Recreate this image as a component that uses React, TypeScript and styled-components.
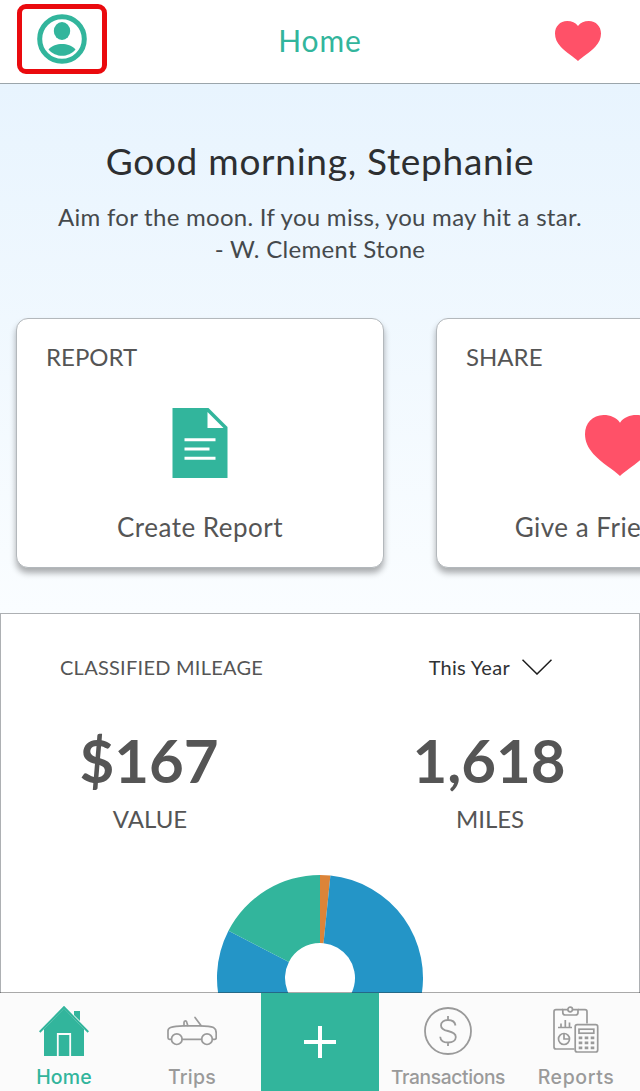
import React from "react";
import styled, { createGlobalStyle } from "styled-components";

const teal = "#32b59c";
const coral = "#ff5168";
const iconGray = "#9a9a9a";

const GlobalStyle = createGlobalStyle`
  * { box-sizing: border-box; }
  html, body { margin: 0; padding: 0; }
  body {
    font-family: Lato, "Liberation Sans", sans-serif;
    color: #555;
    background: #fff;
    overflow: hidden;
  }
  svg { display: block; flex: none; }
`;

const Screen = styled.div`
  display: flex;
  flex-direction: column;
  width: 640px;
  height: 1091px;
  overflow: hidden;
`;

const TopBar = styled.header`
  display: grid;
  grid-template-columns: 1fr auto 1fr;
  align-items: center;
  height: 84px;
  padding: 0 17px 5px;
  background: #fff;
  border-bottom: 1px solid #9ba5ab;
`;

const ProfileButton = styled.div`
  display: flex;
  align-items: center;
  justify-content: center;
  width: 90px;
  height: 70px;
  border: 5px solid #ea0a0e;
  border-radius: 9px;
`;

const ScreenTitle = styled.h1`
  margin: 0;
  padding-top: 2px;
  font-size: 30px;
  line-height: 36px;
  font-weight: 400;
  letter-spacing: 0.9px;
  color: ${teal};
`;

const TopAction = styled.div`
  justify-self: end;
  padding: 4px 22px 0 0;
`;

const Hero = styled.section`
  height: 529px;
  padding-top: 55px;
  background: linear-gradient(#e8f4fe, #fafdff);
`;

const Greeting = styled.h2`
  margin: 0;
  font-size: 37px;
  line-height: 44px;
  font-weight: 400;
  letter-spacing: 0.73px;
  text-align: center;
  color: #2d2f31;
`;

const Quote = styled.p`
  margin: 18px 0 0;
  font-size: 24px;
  line-height: 32px;
  letter-spacing: 0.28px;
  text-align: center;
  color: #45494c;
`;

const Carousel = styled.div`
  display: flex;
  gap: 52px;
  margin-top: 53px;
  padding-left: 16px;
`;

const Card = styled.article`
  display: flex;
  flex: none;
  flex-direction: column;
  align-items: center;
  width: 368px;
  height: 250px;
  padding: 23px 29px;
  background: #fff;
  border: 1px solid #b3b8bc;
  border-radius: 12px;
  box-shadow: 0 5px 6px rgba(0, 0, 0, 0.32);
`;

const CardLabel = styled.div`
  align-self: flex-start;
  font-size: 24px;
  line-height: 30px;
  letter-spacing: 0;
`;

const CardArt = styled.div<{ $drop?: number }>`
  display: flex;
  align-items: center;
  height: 70px;
  margin-top: 36px;
  padding-top: ${(p) => p.$drop || 0}px;
`;

const CardAction = styled.div`
  margin-top: 33px;
  font-size: 26px;
  line-height: 32px;
  white-space: nowrap;
  letter-spacing: 0.5px;
`;

const Summary = styled.section`
  height: 380px;
  overflow: hidden;
  background: #fff;
  border: 1px solid #adb0b3;
  border-bottom: 0;
`;

const SummaryHeader = styled.div`
  display: flex;
  align-items: center;
  justify-content: space-between;
  height: 26px;
  margin-top: 40px;
  padding: 0 87px 0 59px;
`;

const SummaryTitle = styled.div`
  font-size: 20px;
  line-height: 26px;
  letter-spacing: 0.25px;
`;

const PeriodSelect = styled.div`
  display: flex;
  align-items: center;
  gap: 12px;
  font-size: 20px;
  line-height: 26px;
  letter-spacing: 0.3px;
  color: #303234;
`;

const StatRow = styled.div`
  display: flex;
  justify-content: space-between;
  margin: 44px -1px 0;
`;

const Stat = styled.div`
  width: 300px;
  text-align: center;
`;

const StatNumber = styled.div`
  font-size: 60px;
  line-height: 72px;
  font-weight: 700;
  letter-spacing: 0;
  margin: 0 1px 0 -1px;
`;

const StatLabel = styled.div`
  margin-top: 8px;
  font-size: 24px;
  line-height: 30px;
`;

const ChartArea = styled.div`
  display: flex;
  justify-content: center;
  margin-top: 41px;
`;

const TabBar = styled.nav`
  display: grid;
  grid-template-columns: repeat(5, 1fr);
  position: relative;
  height: 99px;
  margin-top: -1px;
  background: #fbfbfb;
  background-clip: padding-box;
  border-top: 1px solid rgba(40, 40, 40, 0.4);
`;

const Tab = styled.div<{ $active?: boolean; $spacing: number; $size?: number }>`
  display: flex;
  flex-direction: column;
  align-items: center;
  justify-content: space-between;
  padding: 12px 0 2px;
  font-family: Inter, "Liberation Sans", sans-serif;
  font-size: ${(p) => p.$size || 19.5}px;
  line-height: 24px;
  font-weight: 500;
  letter-spacing: ${(p) => p.$spacing}px;
  color: ${(p) => (p.$active ? teal : iconGray)};
`;

const AddButton = styled.div`
  display: flex;
  align-items: center;
  justify-content: center;
  justify-self: center;
  width: 118px;
  background: ${teal};
`;

const ProfileIcon = () => (
  <svg width="50" height="50" viewBox="0 0 50 50" fill={teal}>
    <circle cx="25" cy="25" r="22.3" fill="none" stroke={teal} strokeWidth="5" />
    <ellipse cx="25" cy="17" rx="8.2" ry="9" />
    <path d="M11.500 35.500C15 31.500 20 30 25 30s10 1.500 13.500 5.500C35 39.500 30 41.800 25 41.800S15 39.500 11.500 35.500Z" />
  </svg>
);

const Heart = ({ width, height }: { width: number; height: number }) => (
  <svg width={width} height={height} viewBox="0 0 46 40" preserveAspectRatio="none">
    <path
      d="M23 40C19 36 11 31.500 5.500 25.500C2 21.500 0 17.500 0 12.500C0 5.500 5 0 12.200 0C16.700 0 20.700 1.700 23 5C25.300 1.700 29.300 0 33.800 0C41 0 46 5.500 46 12.500C46 17.500 44 21.500 40.500 25.500C35 31.500 27 36 23 40Z"
      fill={coral}
    />
  </svg>
);

const DocumentIcon = () => (
  <svg width="56" height="70" viewBox="0 0 56 70">
    <path d="M0.500 0H36.500L55.500 19V70H0.500Z" fill={teal} />
    <path d="M35.500 4V20H51.500Z" fill="#fff" />
    <path d="M12.500 31.700H43.500M12.500 41H37.500M12.500 50.300H43.500" stroke="#fff" strokeWidth="3" />
  </svg>
);

const ChevronDown = () => (
  <svg width="30" height="16" viewBox="0 0 30 16" fill="none" stroke="#1c1c1c" strokeWidth="1.500">
    <path d="M0.500 0.700L15 15L29.500 0.700" />
  </svg>
);

const HomeIcon = () => (
  <svg width="50" height="51" viewBox="0 0 50 51" fill={teal}>
    <path d="M35 6H41V16L35 10Z" />
    <path d="M5 24L25 3.500L45 24V51H5Z" />
    <path d="M0.700 27L25 2.300L49.300 27" fill="none" stroke={teal} strokeWidth="2" />
    <path d="M18.800 51V29H31.200V51" fill="none" stroke="#fbfbfb" strokeWidth="1.800" />
  </svg>
);

const CarIcon = () => (
  <svg width="50" height="50" viewBox="0 0 50 50" fill="none" stroke={iconGray} strokeWidth="1.700" strokeLinejoin="round" strokeLinecap="round">
    <path d="M4.300 34.300H2.500Q1 34.300 1 32.800V26Q1 23.500 3.500 22.500Q8 20.800 16.500 20.800H33Q43 20.800 46.500 22.500Q49.200 24 49.200 28V32.800Q49.200 34.300 47.700 34.300H45.700M15.200 34.300H34.500" />
    <path d="M28 12.500L34 20.500M17 20.500V17.500Q17 15.800 18.300 15.800Q19.500 15.800 19.800 17.200L20.700 20.500" />
    <circle cx="9.800" cy="34.200" r="5.300" />
    <circle cx="40" cy="34.200" r="5.300" />
  </svg>
);

const DollarIcon = () => (
  <svg width="50" height="50" viewBox="0 0 50 50" fill="none" stroke={iconGray} strokeWidth="1.800">
    <circle cx="25" cy="26" r="23" />
    <path d="M25 11V15M25 37.500V41M32.500 20.500C32 17 29 15 25 15C21 15 18 17.100 18 20.400C18 23.500 20.500 25 25 26C30 27.100 32.800 28.800 32.800 32C32.800 35.400 29.600 37.500 25.200 37.500C20.800 37.500 17.500 35.500 17.200 31.700" />
  </svg>
);

const ReportsIcon = () => (
  <svg width="46" height="50" viewBox="0 0 46 50" fill="none" stroke={iconGray} strokeWidth="1.700">
    <path d="M10 4.700H3Q1 4.700 1 6.700V42Q1 44 3 44H21.500M25 4.700H32Q34 4.700 34 6.700V18.500" />
    <path d="M15 4.700H9.800V7.500Q9.800 10 12.300 10H22.500Q25 10 25 7.500V4.700H19.500" />
    <circle cx="17.200" cy="4.500" r="2.300" />
    <path d="M5 22.500H19M8 22V18.500M12.300 22V15M16.500 22V17.500" />
    <circle cx="11" cy="34" r="5.500" />
    <path d="M11 28.500V34H16.500" />
    <rect x="22.200" y="19.700" width="22.500" height="27.300" rx="2" />
    <rect x="26" y="24.200" width="14.800" height="4" />
    <path d="M25.700 32.800H42M25.700 37.800H42M25.700 42.800H42" strokeWidth="2.800" strokeDasharray="3.600 2.400" />
  </svg>
);

const PlusIcon = () => (
  <svg width="32" height="32" viewBox="0 0 32 32" stroke="#fff" strokeWidth="4">
    <path d="M0 16H32M16 0V32" />
  </svg>
);

type Slice = { from: number; to: number; color: string };

const slices: Slice[] = [
  { from: 0, to: 5.8, color: "#dc8438" },
  { from: 5.8, to: 297.3, color: "#2495c7" },
  { from: 297.3, to: 360, color: teal },
];

const point = (radius: number, degrees: number) => {
  const a = (degrees * Math.PI) / 180;
  return `${103 + radius * Math.sin(a)} ${103 - radius * Math.cos(a)}`;
};

const ring = ({ from, to }: Slice) => {
  const large = to - from > 180 ? 1 : 0;
  return `M${point(103, from)}A103 103 0 ${large} 1 ${point(103, to)}L${point(35, to)}A35 35 0 ${large} 0 ${point(35, from)}Z`;
};

const DonutChart = () => (
  <svg width="206" height="206" viewBox="0 0 206 206">
    {slices.map((slice) => (
      <path key={slice.color} d={ring(slice)} fill={slice.color} />
    ))}
  </svg>
);

export default function App() {
  return (
    <Screen>
      <GlobalStyle />
      <TopBar>
        <ProfileButton>
          <ProfileIcon />
        </ProfileButton>
        <ScreenTitle>Home</ScreenTitle>
        <TopAction>
          <Heart width={46} height={40} />
        </TopAction>
      </TopBar>

      <Hero>
        <Greeting>Good morning, Stephanie</Greeting>
        <Quote>
          Aim for the moon. If you miss, you may hit a star.
          <br />- W. Clement Stone
        </Quote>
        <Carousel>
          <Card>
            <CardLabel>REPORT</CardLabel>
            <CardArt>
              <DocumentIcon />
            </CardArt>
            <CardAction>Create Report</CardAction>
          </Card>
          <Card>
            <CardLabel>SHARE</CardLabel>
            <CardArt $drop={5}>
              <Heart width={70} height={61} />
            </CardArt>
            <CardAction>Give a Friend $20</CardAction>
          </Card>
        </Carousel>
      </Hero>

      <Summary>
        <SummaryHeader>
          <SummaryTitle>CLASSIFIED MILEAGE</SummaryTitle>
          <PeriodSelect>
            This Year
            <ChevronDown />
          </PeriodSelect>
        </SummaryHeader>
        <StatRow>
          <Stat>
            <StatNumber>$167</StatNumber>
            <StatLabel>VALUE</StatLabel>
          </Stat>
          <Stat>
            <StatNumber>1,618</StatNumber>
            <StatLabel>MILES</StatLabel>
          </Stat>
        </StatRow>
        <ChartArea>
          <DonutChart />
        </ChartArea>
      </Summary>

      <TabBar>
        <Tab $active $spacing={0.1}>
          <HomeIcon />
          Home
        </Tab>
        <Tab $spacing={0.2}>
          <CarIcon />
          Trips
        </Tab>
        <AddButton>
          <PlusIcon />
        </AddButton>
        <Tab $spacing={-0.35} $size={19.2}>
          <DollarIcon />
          Transactions
        </Tab>
        <Tab $spacing={0.6}>
          <ReportsIcon />
          Reports
        </Tab>
      </TabBar>
    </Screen>
  );
}
